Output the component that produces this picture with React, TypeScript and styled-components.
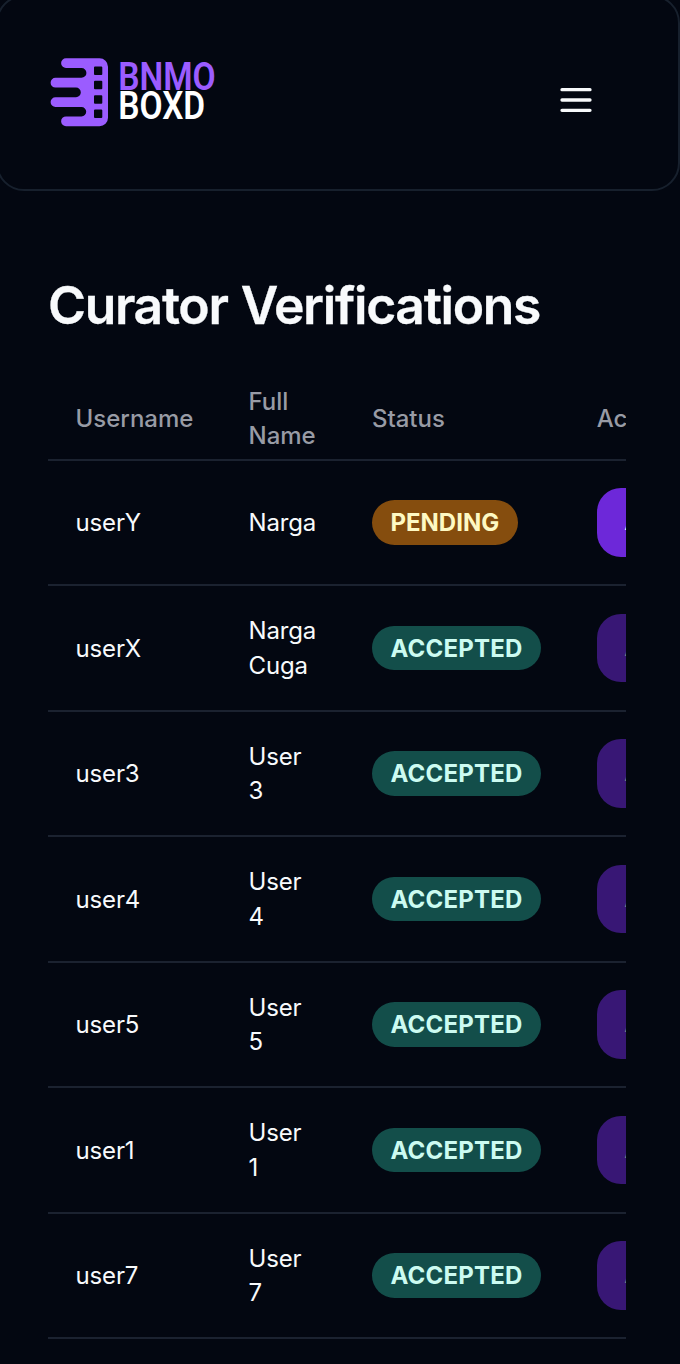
import React from "react";
import styled, { createGlobalStyle } from "styled-components";

const GlobalStyle = createGlobalStyle`
  *, *::before, *::after { box-sizing: border-box; }
  html, body { margin: 0; background: #030711; }
  body {
    color: #f8fafc;
    font-family: Inter, "Liberation Sans", sans-serif;
    font-size: 24px;
    line-height: 34.4px;
    overflow: hidden;
  }
  h1 { margin: 0; }
`;

const Page = styled.div`
  width: 680px;
  height: 1364px;
  overflow: hidden;
`;

const Header = styled.header`
  display: flex;
  align-items: center;
  justify-content: space-between;
  height: 196px;
  margin: -5px 0 0 -4px;
  padding: 10px 85px 0 50px;
  border: 2px solid #17202d;
  border-radius: 28px;
`;

const Logo = styled.svg`
  display: block;
  width: 170px;
  height: 76px;
  margin-top: -12px;
`;

const MenuButton = styled.button`
  display: block;
  padding: 0;
  border: 0;
  background: none;
  color: #f8fafc;
  height: 34px;
  margin-top: 4px;
`;

const Main = styled.main`
  padding: 83px 54px 0 48px;
`;

const Title = styled.h1`
  font-size: 51.6px;
  line-height: 62px;
  font-weight: 600;
  letter-spacing: -1.33px;
  word-spacing: 1.5px;
  white-space: nowrap;
  -webkit-text-stroke: 0.3px currentColor;
`;

const TableViewport = styled.div`
  margin-top: 48px;
  overflow: hidden;
`;

const Table = styled.div`
  width: 860px;
`;

const Row = styled.div<{ $head?: boolean }>`
  display: grid;
  grid-template-columns: 173px 123.4px 224.8px 1fr;
  align-items: center;
  height: ${(p) => (p.$head ? "76.7px" : "125.5px")};
  padding-bottom: ${(p) => (p.$head ? "4px" : "0")};
  border-bottom: 2px solid #1b2230;
  color: ${(p) => (p.$head ? "#989ba5" : "inherit")};
  font-weight: ${(p) => (p.$head ? 500 : 400)};
`;

const Cell = styled.div`
  padding: 0 27.5px;
`;

const TextCell = styled(Cell)`
  padding-top: 1.8px;
  letter-spacing: -0.15px;
`;

const Badge = styled.span<{ $pending: boolean }>`
  display: block;
  width: max-content;
  margin-left: -0.4px;
  padding: 6px 18.9px 4.2px;
  border-radius: 999px;
  font-weight: 700;
  letter-spacing: ${(p) => (p.$pending ? "0" : "0.2px")};
  background: ${(p) => (p.$pending ? "#854d0e" : "#134e4a")};
  color: ${(p) => (p.$pending ? "#fef9c3" : "#ccfbf1")};
`;

const AcceptButton = styled.button`
  display: block;
  height: 68.8px;
  padding: 0 27.5px;
  border: 0;
  border-radius: 24px;
  background: #6d28d9;
  color: #f8fafc;
  font: inherit;
  font-weight: 500;
  &:disabled { opacity: 0.5; }
`;

const users = [
  { username: "userY", name: "Narga", status: "PENDING" },
  { username: "userX", name: "Narga Cuga", status: "ACCEPTED" },
  { username: "user3", name: "User 3", status: "ACCEPTED" },
  { username: "user4", name: "User 4", status: "ACCEPTED" },
  { username: "user5", name: "User 5", status: "ACCEPTED" },
  { username: "user1", name: "User 1", status: "ACCEPTED" },
  { username: "user7", name: "User 7", status: "ACCEPTED" },
];

function BrandLogo() {
  return (
    <Logo viewBox="48 54 170 76" aria-label="BNMO BOXD">
      <path
        fill="#9b5cff"
        fillRule="evenodd"
        d="M66 58.3H99.5a8.5 8.5 0 0 1 8.500 8.500V117.700a8.500 8.500 0 0 1-8.500 8.500H66a4.900 4.900 0 0 1 0-9.800H81.500a4.700 4.700 0 0 0 0-9.400H55.500a4.900 4.900 0 0 1 0-9.800H76a4.800 4.800 0 0 0 0-9.600H55.500a4.900 4.900 0 0 1 0-9.800H81.500a4.900 4.900 0 0 0 0-9.800H66a4.900 4.900 0 0 1 0-9.800ZM95 66.500a1 1 0 0 0-1 1V74a1 1 0 0 0 1 1h6.300a1 1 0 0 0 1-1V67.500a1 1 0 0 0-1-1ZM95 80.800a1 1 0 0 0-1 1V88.300a1 1 0 0 0 1 1h6.300a1 1 0 0 0 1-1V81.800a1 1 0 0 0-1-1ZM95 95.200a1 1 0 0 0-1 1V102.700a1 1 0 0 0 1 1h6.300a1 1 0 0 0 1-1V96.200a1 1 0 0 0-1-1ZM95 109.500a1 1 0 0 0-1 1V117a1 1 0 0 0 1 1h6.300a1 1 0 0 0 1-1V110.500a1 1 0 0 0-1-1Z"
      />
      <g fontFamily="Roboto, sans-serif" fontWeight="600" fontSize="38">
        <text x="118.200" y="90" fill="#9b5cff" textLength="97.500" lengthAdjust="spacingAndGlyphs">BNMO</text>
        <text x="118.200" y="118.500" fill="#fff" textLength="87" lengthAdjust="spacingAndGlyphs">BOXD</text>
      </g>
    </Logo>
  );
}

function MenuIcon() {
  return (
    <svg width="34" height="34" viewBox="0 0 34 34" fill="none" stroke="currentColor" strokeWidth="3.300" strokeLinecap="round" display="block">
      <path d="M3 6.700H31M3 17H31M3 27.300H31" />
    </svg>
  );
}

export default function App() {
  return (
    <Page>
      <GlobalStyle />
      <Header>
        <BrandLogo />
        <MenuButton aria-label="Open menu">
          <MenuIcon />
        </MenuButton>
      </Header>
      <Main>
        <Title>Curator Verifications</Title>
        <TableViewport>
          <Table>
            <Row $head>
              <Cell>Username</Cell>
              <Cell>Full Name</Cell>
              <Cell>Status</Cell>
              <Cell>Action</Cell>
            </Row>
            {users.map((u) => (
              <Row key={u.username}>
                <TextCell>{u.username}</TextCell>
                <TextCell>{u.name}</TextCell>
                <Cell>
                  <Badge $pending={u.status === "PENDING"}>{u.status}</Badge>
                </Cell>
                <Cell>
                  <AcceptButton disabled={u.status !== "PENDING"}>Accept</AcceptButton>
                </Cell>
              </Row>
            ))}
          </Table>
        </TableViewport>
      </Main>
    </Page>
  );
}
